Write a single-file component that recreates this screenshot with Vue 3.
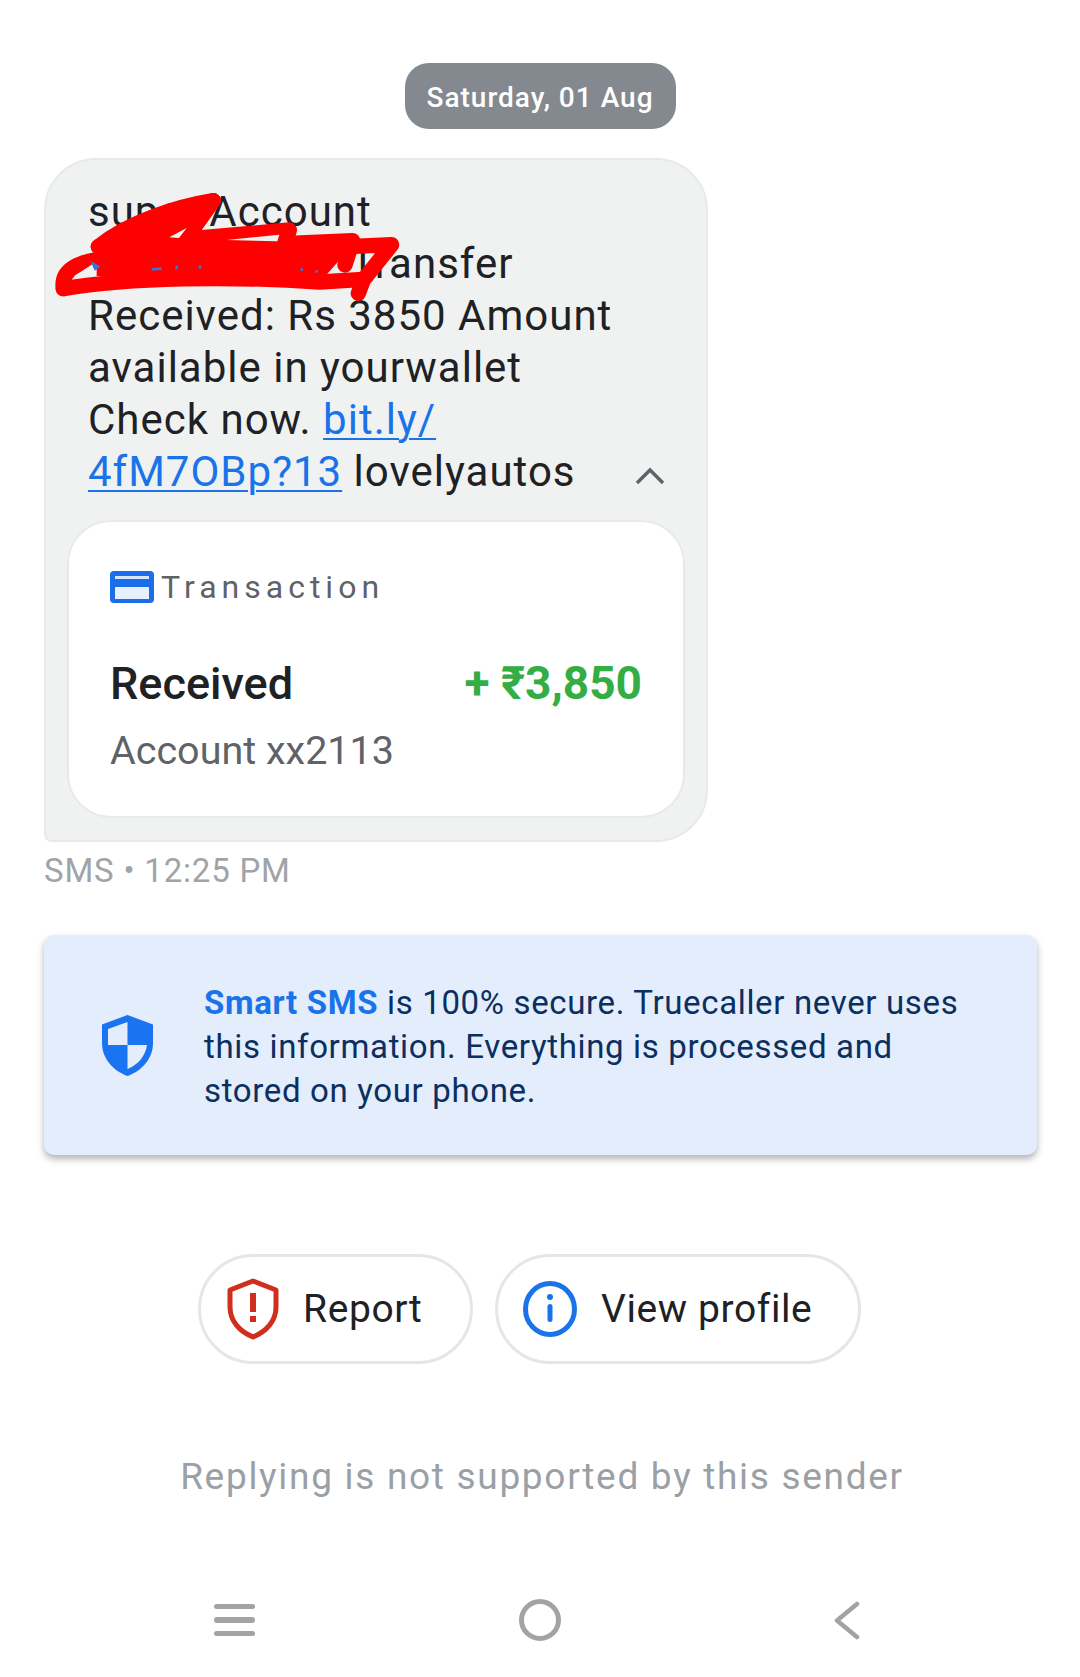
<script setup>
const menuLines = [0, 1, 2]
</script>

<template>
  <div class="screen">
    <div class="date-row"><span class="date-pill">Saturday, 01 Aug</span></div>

    <div class="bubble">
      <div class="msg-row">
        <p class="msg">super Account<br /><a class="link hidden-link">•••••••••••••••</a> Transfer<br />Received: Rs 3850 Amount<br />available in yourwallet<br />Check now. <a class="link">bit.ly/</a><br /><a class="link">4fM7OBp?13</a> lovelyautos</p>
        <svg class="chevron" viewBox="0 0 30 18" width="30" height="18"><path d="M2 16 15 3l13 13" fill="none" stroke="#5f6368" stroke-width="3.4" /></svg>
      </div>
      <div class="card">
        <div class="card-head">
          <svg class="card-icon" viewBox="0 0 44 32" width="44" height="32">
            <rect width="44" height="32" rx="4" fill="#1a6fe8" />
            <rect x="5" y="5" width="34" height="3" fill="#d6e6fd" />
            <rect x="5" y="16" width="34" height="12" fill="#e6f0ff" />
          </svg>
          <span class="card-title">Transaction</span>
        </div>
        <div class="card-main">
          <span class="received">Received</span>
          <span class="amount">+ ₹3,850</span>
        </div>
        <div class="account">Account xx2113</div>
      </div>
    </div>
    <div class="meta">SMS • 12:25 PM</div>

    <div class="info">
      <svg class="shield" viewBox="0 0 51 61" width="51" height="61">
        <path d="M25.5 0 51 9.5V28c0 15-10.500 27.500-25.500 33C10.500 55.500 0 43 0 28V9.500Z" fill="#1a73f0" />
        <path d="M25.500 7 6 14v16h19.500ZM25.500 30H45c-1.500 11-9 20-19.500 24Z" fill="#e3edfb" />
      </svg>
      <p class="info-text"><b>Smart SMS</b> is 100% secure. Truecaller never uses<br />this information. Everything is processed and<br />stored on your phone.</p>
    </div>

    <div class="actions">
      <button class="action report">
        <svg viewBox="0 0 52 62" width="52" height="62">
          <path d="M26 3 49 12v17c0 14-9.500 24.500-23 30C12.500 53.500 3 43 3 29V12Z" fill="none" stroke="#d12f1d" stroke-width="5" stroke-linejoin="round" />
          <rect x="23" y="15" width="6" height="19" fill="#d12f1d" />
          <rect x="23" y="38" width="6" height="6" fill="#d12f1d" />
        </svg>
        <span>Report</span>
      </button>
      <button class="action profile">
        <svg viewBox="0 0 54 56" width="54" height="56">
          <ellipse cx="27" cy="28" rx="24.500" ry="25.500" fill="none" stroke="#1a73e8" stroke-width="5" />
          <circle cx="27" cy="16" r="3" fill="#1a73e8" />
          <rect x="24.500" y="23" width="5" height="18" rx="2.500" fill="#1a73e8" />
        </svg>
        <span>View profile</span>
      </button>
    </div>

    <div class="no-reply">Replying is not supported by this sender</div>

    <nav class="nav">
      <span class="menu"><i v-for="l in menuLines" :key="l"></i></span>
      <span class="home"></span>
      <svg class="back" viewBox="0 0 27 39" width="27" height="39"><path d="M24 3 4 19.500 24 36" fill="none" stroke="#a3a3a3" stroke-width="4.500" stroke-linecap="round" stroke-linejoin="round" /></svg>
    </nav>

    <svg class="scribble" viewBox="0 0 1200 600" width="400" height="200">
      <path d="M200 290 770 262 960 295 880 385 200 378Z" fill="#ff0000" />
      <path d="M555 150 500 250 200 300 210 275C320 200 440 160 555 150Z" fill="#ff0000" />
      <g fill="none" stroke="#ff0000" stroke-width="46" stroke-linecap="round" stroke-linejoin="round">
        <path d="M550 152C440 170 300 215 205 290" />
        <path d="M550 152 480 250" />
        <path d="M205 290 778 240 762 292" />
        <path d="M225 305 968 272 945 345" />
        <path d="M100 416C92 360 140 330 260 322L1085 284 1000 390 985 430" />
        <path d="M100 416C300 382 600 378 870 396L1000 388" />
      </g>
      <path d="M132 379 188 342 194 378ZM418 262 470 234 447 264ZM590 270 748 254 742 274Z" fill="#f0f2f2" />
      <path d="M190 342 204 350 196 356ZM365 358 395 356M440 347V358M510 346V356M815 355V362M860 361V368" fill="none" stroke="#3f6fd8" stroke-width="8" />
    </svg>
  </div>
</template>

<style>
html, body { margin: 0; background: #fff; }
</style>

<style scoped>
.screen {
  position: relative;
  width: 1080px;
  height: 1677px;
  overflow: hidden;
  background: #fff;
  font-family: Roboto, "Noto Sans", sans-serif;
  color: #202124;
}
p { margin: 0; }
.date-row { display: flex; justify-content: center; padding-top: 63px; }
.date-pill {
  box-sizing: border-box;
  width: 271px;
  height: 66px;
  padding-top: 2px;
  display: flex;
  align-items: center;
  justify-content: center;
  border-radius: 24px;
  background: #83898e;
  color: #fff;
  font-size: 28px;
  font-weight: 500;
  letter-spacing: 1px;
}
.bubble {
  box-sizing: border-box;
  width: 664px;
  height: 684px;
  margin: 29px 0 0 44px;
  padding: 26px 21px 20px 21px;
  background: #f0f2f2;
  border: 2px solid #e8eaea;
  border-radius: 52px 52px 52px 8px;
}
.msg-row { display: flex; justify-content: space-between; align-items: flex-end; padding: 0 20px 0 21px; }
.msg { font-size: 42px; line-height: 52px; letter-spacing: 1px; white-space: nowrap; }
.link { color: #1a73e8; text-decoration: underline; text-underline-offset: 4px; text-decoration-thickness: 2px; }
.hidden-link { letter-spacing: 2.6px; }
.chevron { margin-bottom: 13px; }
.card {
  box-sizing: border-box;
  height: 298px;
  margin-top: 22px;
  padding: 48px 41px 0;
  background: #fff;
  border: 2px solid #e8eaea;
  border-radius: 44px;
}
.card-head { display: flex; align-items: center; gap: 7px; height: 34px; }
.card-title { font-size: 32px; font-weight: 400; letter-spacing: 5px; color: #5f6368; }
.card-main { display: flex; justify-content: space-between; align-items: center; margin-top: 51px; height: 56px; }
.received { font-size: 45px; font-weight: 500; color: #202124; }
.amount { font-size: 46px; font-weight: 700; color: #34ad44; }
.account { margin-top: 18px; font-size: 39.5px; line-height: 44px; color: #5f6368; }
.meta { margin: 8px 0 0 44px; font-size: 33px; line-height: 42px; letter-spacing: 0.8px; color: #a0a4a8; }
.info {
  box-sizing: border-box;
  width: 993px;
  height: 220px;
  margin: 43px 0 0 44px;
  padding-left: 58px;
  display: flex;
  align-items: center;
  gap: 51px;
  background: #e3edfb;
  border-radius: 10px;
  box-shadow: 0 4px 7px rgba(0, 0, 0, 0.3);
}
.shield { flex: none; }
.info-text { padding-top: 4px; font-size: 33px; line-height: 44px; letter-spacing: 0.65px; color: #0b2f60; white-space: nowrap; }
.info-text b { font-weight: 700; color: #1a73e8; letter-spacing: 0.65px; }
.actions { display: flex; gap: 22px; margin: 99px 0 0 198px; }
.action {
  box-sizing: border-box;
  height: 110px;
  display: flex;
  align-items: center;
  background: #fff;
  border: 3px solid #e6e6e6;
  border-radius: 55px;
  padding: 0;
  font: inherit;
  font-size: 39px;
  letter-spacing: 0.6px;
  color: #202124;
}
.report { width: 275px; padding-left: 26px; gap: 24px; }
.profile { width: 366px; padding-left: 25px; gap: 24px; }
.no-reply {
  margin-top: 91px;
  padding-left: 4px;
  text-align: center;
  font-size: 37px;
  line-height: 44px;
  letter-spacing: 1.7px;
  color: #9aa0a6;
}
.nav {
  display: grid;
  grid-template-columns: repeat(3, 306px);
  justify-items: center;
  align-items: center;
  margin: 100px 0 0 81px;
  height: 42px;
}
.menu { display: flex; flex-direction: column; gap: 8px; width: 41px; }
.menu i { display: block; height: 5.500px; border-radius: 3px; background: #a3a3a3; }
.home { box-sizing: border-box; width: 42px; height: 42px; border: 5px solid #a3a3a3; border-radius: 50%; }
.scribble { position: absolute; left: 30px; top: 150px; }
</style>
